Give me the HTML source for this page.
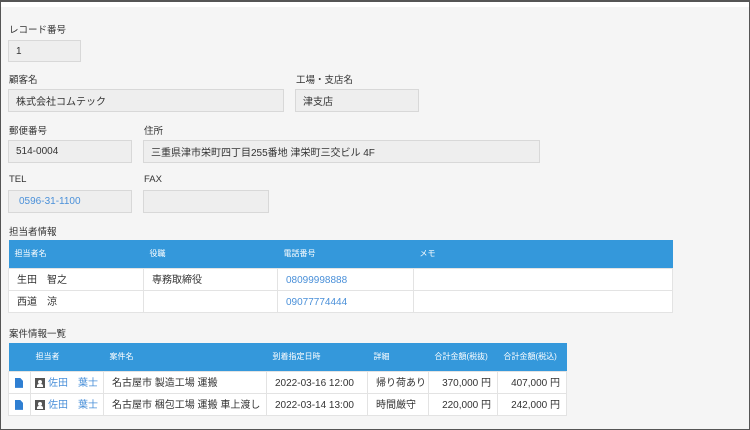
<!DOCTYPE html>
<html><head><meta charset="utf-8"><style>
*{box-sizing:border-box;margin:0;padding:0}
body{width:750px;height:430px;background:#fff;font-family:"Liberation Sans","Noto Sans CJK JP",sans-serif;color:#333;font-size:10px;position:relative;overflow:hidden}
.frame{position:absolute;left:0;top:0;width:750px;height:430px;border:1px solid #555;border-top:2px solid #555}
.bg{position:absolute;left:1px;top:7px;width:748px;height:422px;background:#f5f5f5}
.l{position:absolute;font-size:9.5px;color:#333}
.b{position:absolute;background:#eee;border:1px solid #d8d8d8;padding-left:7px;font-size:10px;display:flex;align-items:center}
table{position:absolute;border-collapse:collapse;font-size:10px;table-layout:fixed}
th{background:#3498db;color:#fff;font-weight:normal;font-size:8px;text-align:left;padding-left:6px;height:28px;border:none;vertical-align:middle}
td{border:1px solid #e3e3e3;background:#fff;padding-left:8px;padding-top:3px;height:22px;line-height:12px;vertical-align:middle;white-space:nowrap;overflow:hidden}
.lk{color:#4a90d9}
.r{text-align:right;padding-right:6px}
.doc{display:inline-block;width:8px;height:10px;background:#2f7fd2;clip-path:polygon(0 0,65% 0,100% 30%,100% 100%,0 100%);vertical-align:middle}
.us{display:inline-block;width:10px;height:10px;background:#555;vertical-align:middle;position:relative;margin-right:3px}
.us:before{content:"";position:absolute;left:3px;top:2px;width:4px;height:4px;border-radius:50%;background:#fff}
.us:after{content:"";position:absolute;left:2px;top:6px;width:6px;height:3px;background:#fff;border-radius:2px 2px 0 0}
</style></head><body>
<div class="bg"></div>
<div class="frame"></div>
<div class="l" style="left:9px;top:22px">レコード番号</div>
<div class="b" style="left:8px;top:40px;width:73px;height:22px">1</div>
<div class="l" style="left:9px;top:72px">顧客名</div>
<div class="b" style="left:8px;top:89px;width:276px;height:23px">株式会社コムテック</div>
<div class="l" style="left:296px;top:72px">工場・支店名</div>
<div class="b" style="left:295px;top:89px;width:124px;height:23px">津支店</div>
<div class="l" style="left:9px;top:123px">郵便番号</div>
<div class="b" style="left:8px;top:140px;width:124px;height:23px">514-0004</div>
<div class="l" style="left:144px;top:123px">住所</div>
<div class="b" style="left:143px;top:140px;width:397px;height:23px">三重県津市栄町四丁目255番地 津栄町三交ビル 4F</div>
<div class="l" style="left:9px;top:174px">TEL</div>
<div class="b lk" style="left:8px;top:190px;width:124px;height:23px;padding-left:10px">0596-31-1100</div>
<div class="l" style="left:144px;top:174px">FAX</div>
<div class="b" style="left:143px;top:190px;width:126px;height:23px"></div>
<div class="l" style="left:9px;top:224px">担当者情報</div>
<table style="left:8px;top:240px;width:665px">
<tr><th style="width:135px">担当者名</th><th style="width:134px">役職</th><th style="width:136px">電話番号</th><th>メモ</th></tr>
<tr><td>生田　智之</td><td>専務取締役</td><td class="lk">08099998888</td><td></td></tr>
<tr><td>西道　涼</td><td></td><td class="lk">09077774444</td><td></td></tr>
</table>
<div class="l" style="left:9px;top:326px">案件情報一覧</div>
<table style="left:8px;top:343px;width:559px">
<tr><th style="width:22px"></th><th style="width:73px;padding-left:5px">担当者</th><th style="width:163px">案件名</th><th style="width:101px">到着指定日時</th><th style="width:61px">詳細</th><th style="width:69px">合計金額(税抜)</th><th>合計金額(税込)</th></tr>
<tr><td style="padding-left:6px"><span class="doc"></span></td><td style="padding-left:4px"><span class="us"></span><span class="lk">佐田　葉士</span></td><td>名古屋市 製造工場 運搬</td><td>2022-03-16 12:00</td><td>帰り荷あり</td><td class="r">370,000 円</td><td class="r">407,000 円</td></tr>
<tr><td style="padding-left:6px"><span class="doc"></span></td><td style="padding-left:4px"><span class="us"></span><span class="lk">佐田　葉士</span></td><td>名古屋市 梱包工場 運搬 車上渡し</td><td>2022-03-14 13:00</td><td>時間厳守</td><td class="r">220,000 円</td><td class="r">242,000 円</td></tr>
</table>
</body></html>
